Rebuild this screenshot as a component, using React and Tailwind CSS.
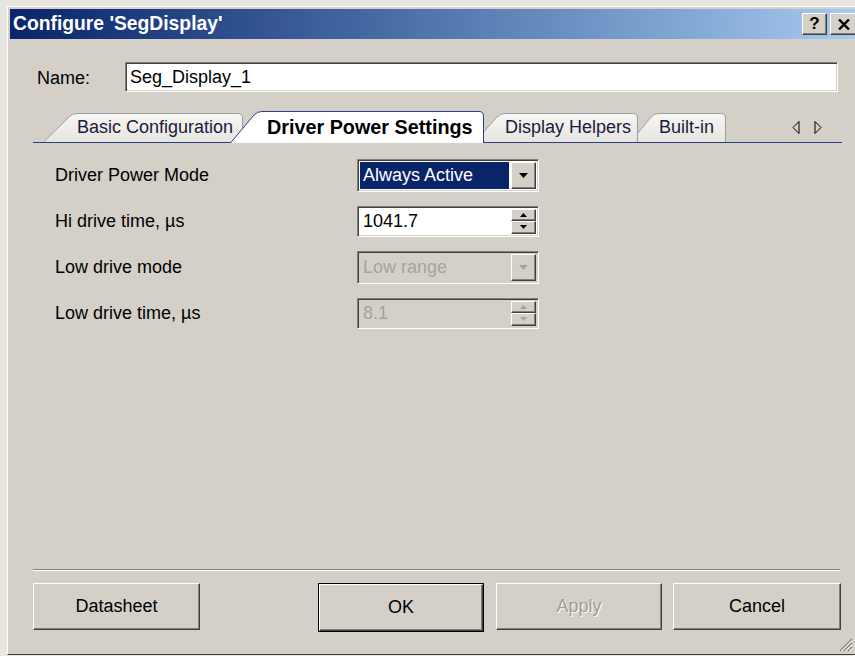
import React from "react";

const raised =
  "border border-t-white border-l-white border-r-[#404040] border-b-[#404040] shadow-[inset_-1px_-1px_0_#808080]";
const sunken =
  "border border-t-[#808080] border-l-[#808080] border-r-white border-b-white shadow-[inset_1px_1px_0_#404040,inset_-1px_-1px_0_#d4d0c8]";

const Down = ({ color = "#000", w = 9 }) => (
  <svg width={w} height={Math.ceil(w / 2)} viewBox={`0 0 ${w} ${Math.ceil(w / 2)}`}>
    <path d={`M0 0H${w}L${w / 2} ${Math.ceil(w / 2)}Z`} fill={color} />
  </svg>
);

const Up = ({ color = "#000", w = 7 }) => (
  <svg width={w} height={Math.ceil(w / 2)} viewBox={`0 0 ${w} ${Math.ceil(w / 2)}`}>
    <path d={`M0 ${Math.ceil(w / 2)}H${w}L${w / 2} 0Z`} fill={color} />
  </svg>
);

function Combo({ value, disabled }) {
  return (
    <div className={`flex h-[33px] w-[182px] p-[2px] ${sunken} ${disabled ? "bg-[#d4d0c8]" : "bg-white"}`}>
      <div
        className={`flex flex-1 items-center pl-[3px] ${
          disabled ? "text-[#a7a39c]" : "bg-[#0a246a] text-white"
        }`}
      >
        {value}
      </div>
      <div className={`ml-[2px] flex w-[25px] items-center justify-center bg-[#d4d0c8] ${raised}`}>
        <Down color={disabled ? "#a7a39c" : "#000"} />
      </div>
    </div>
  );
}

function Spin({ value, disabled }) {
  return (
    <div className={`flex h-[31px] w-[182px] p-[2px] ${sunken} ${disabled ? "bg-[#d4d0c8]" : "bg-white"}`}>
      <div className={`flex flex-1 items-center pl-[3px] ${disabled ? "text-[#a7a39c]" : ""}`}>{value}</div>
      <div className="ml-[2px] flex w-[25px] flex-col">
        <div className={`flex flex-1 items-center justify-center bg-[#d4d0c8] ${raised}`}>
          <Up color={disabled ? "#a7a39c" : "#000"} />
        </div>
        <div className={`flex flex-1 items-center justify-center bg-[#d4d0c8] ${raised}`}>
          <Down w={7} color={disabled ? "#a7a39c" : "#000"} />
        </div>
      </div>
    </div>
  );
}

// tab outline: slanted left side, rounded top-right corner
function Tab({ label, width, slant, pad, active, className = "" }) {
  const h = active ? 32 : 29;
  const d = `M0.5 ${h} L${slant - 4} 4 Q${slant - 1} 0.5 ${slant + 4} 0.5 L${width - 5} 0.5 Q${width - 0.5} 0.5 ${
    width - 0.5
  } 5 L${width - 0.5} ${h}`;
  return (
    <div
      className={`relative flex items-center ${active ? "z-10 -mb-px h-[32px] pt-[2px]" : "h-[29px]"} ${className}`}
      style={{ width }}
    >
      <svg className="absolute inset-0" width={width} height={h}>
        <defs>
          <linearGradient id="tabfill" x1="0" y1="0" x2="0" y2="1">
            <stop offset="0" stopColor="#f8f7f4" />
            <stop offset="1" stopColor="#e6e4de" />
          </linearGradient>
        </defs>
        <path d={d + " Z"} fill={active ? "#fff" : "url(#tabfill)"} stroke="none" />
        <path d={d} fill="none" stroke={active ? "#2e3f86" : "#9a9ea6"} strokeWidth="1" />
      </svg>
      <span
        className={`relative whitespace-nowrap ${active ? "font-bold text-[19.8px]" : "text-[#1a1a40]"}`}
        style={{ paddingLeft: pad ?? slant + 4 }}
      >
        {label}
      </span>
    </div>
  );
}

function Button({ children, disabled, className = "" }) {
  return (
    <div
      className={`flex h-[47px] items-center justify-center bg-[#d4d0c8] ${raised} ${
        disabled ? "text-[#a09c95] [text-shadow:1px_1px_0_#fff]" : ""
      } ${className}`}
    >
      {children}
    </div>
  );
}

const rows = [
  { label: "Driver Power Mode", control: <Combo value="Always Active" /> },
  { label: "Hi drive time, µs", control: <Spin value="1041.7" /> },
  { label: "Low drive mode", control: <Combo value="Low range" disabled /> },
  { label: "Low drive time, µs", control: <Spin value="8.1" disabled /> },
];

export default function App() {
  return (
    <div className="h-[656px] w-[855px] overflow-hidden bg-[#e8e6e1] pl-[7px] pt-[6px] font-['Liberation_Sans',Arial,sans-serif] text-[18px] text-black">
      <div className="relative flex h-[649px] w-[848px] flex-col overflow-hidden border-b border-l border-t border-b-[#404040] border-l-white border-t-white bg-[#d4d0c8] py-[2px] pl-[2px]">
        {/* title bar */}
        <div className="flex h-[30px] shrink-0 items-center bg-gradient-to-r from-[#0a246a] to-[#a6caf0] pl-[3px]">
          <span className="flex-1 text-[19.3px] font-bold text-white">Configure 'SegDisplay'</span>
          <div className={`flex h-[22px] w-[25px] items-center justify-center bg-[#d4d0c8] text-[17px] font-bold ${raised}`}>
            ?
          </div>
          <div className={`-mr-[3px] ml-[3px] flex h-[22px] w-[28px] items-center justify-center bg-[#d4d0c8] ${raised}`}>
            <svg width="12" height="11" viewBox="0 0 12 11">
              <path d="M1 0.5L11 10.5M11 0.5L1 10.5" stroke="#000" strokeWidth="2.4" />
            </svg>
          </div>
        </div>

        {/* name */}
        <div className="mt-[23px] flex h-[30px] items-center pl-[27px]">
          <span className="w-[88px] pt-[3px]">Name:</span>
          <div className={`flex h-[30px] w-[713px] items-center bg-white pl-[4px] ${sunken}`}>Seg_Display_1</div>
        </div>

        {/* tabs */}
        <div className="ml-[23px] mt-[20px] flex h-[31px] w-[809px] items-end border-b border-[#2e3f86]">
          <Tab label="Basic Configuration" width={200} slant={30} className="z-[4] ml-[10px]" />
          <Tab label="Driver Power Settings" width={254} slant={28} pad={37} active className="-ml-[13px]" />
          <Tab label="Display Helpers" width={164} slant={27} className="z-[3] -ml-[10px]" />
          <Tab label="Built-in" width={96} slant={25} className="z-[2] -ml-[8px]" />
          <div className="mb-[8px] ml-auto mr-[20px] flex items-center gap-[14px]">
            <svg width="8" height="13" viewBox="0 0 8 13">
              <path d="M7 0.5V12.5L1 6.5Z" fill="none" stroke="#000" />
            </svg>
            <svg width="8" height="13" viewBox="0 0 8 13">
              <path d="M1 0.5V12.5L7 6.5Z" fill="none" stroke="#000" />
            </svg>
          </div>
        </div>

        {/* settings */}
        <div className="mt-[9px] flex flex-col pl-[45px]">
          {rows.map((r) => (
            <div key={r.label} className="flex h-[46px] items-center">
              <span className="w-[302px]">{r.label}</span>
              {r.control}
            </div>
          ))}
        </div>

        <div className="flex-1" />

        <div className="ml-[23px] w-[807px] border-b border-t border-b-white border-t-[#808080]" />

        <div className="mb-[20px] ml-[23px] mt-[12px] flex">
          <Button className="w-[167px]">Datasheet</Button>
          <div className="ml-[118px] w-[166px] border border-black">
            <Button className="h-[45px]">OK</Button>
          </div>
          <Button disabled className="ml-[12px] w-[166px]">
            Apply
          </Button>
          <Button className="ml-[11px] w-[168px]">Cancel</Button>
        </div>

        {/* size grip */}
        <svg className="absolute bottom-[2px] right-[2px]" width="16" height="16" viewBox="0 0 16 16">
          <path d="M15 3L3 15M15 7L7 15M15 11L11 15" stroke="#808080" strokeWidth="1.4" />
          <path d="M15 4.5L4.5 15M15 8.5L8.5 15M15 12.5L12.5 15" stroke="#fff" strokeWidth="1" />
        </svg>
      </div>
    </div>
  );
}
